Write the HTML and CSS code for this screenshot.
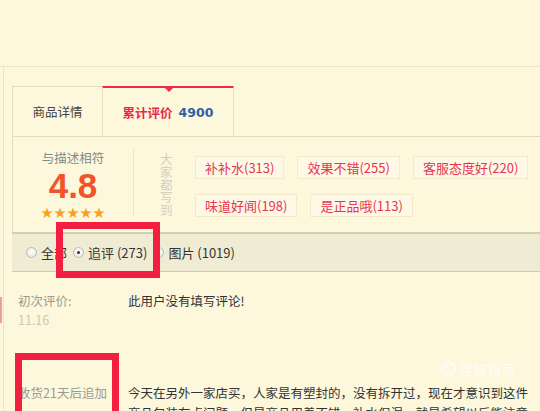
FILE: index.html
```html
<!DOCTYPE html>
<html lang="zh-CN">
<head>
<meta charset="utf-8">
<title>累计评价</title>
<link rel="stylesheet" href="styles.css">
</head>
<body>
<div class="page">
  <div class="header"></div>
  <div class="wrap">
    <div class="tabs">
      <div class="tab">商品详情</div>
      <div class="tab active"><span class="tab-name">累计评价</span><span class="tab-count">4900</span></div>
    </div>
    <div class="rating">
      <div class="score">
        <div class="score-label">与描述相符</div>
        <div class="score-value">4.8</div>
        <div class="stars">★★★★★</div>
      </div>
      <div class="divider"></div>
      <div class="vlabel">大家都写到</div>
      <div class="tags">
        <div class="tag-row">
          <span class="tag">补补水(313)</span>
          <span class="tag">效果不错(255)</span>
          <span class="tag">客服态度好(220)</span>
        </div>
        <div class="tag-row">
          <span class="tag">味道好闻(198)</span>
          <span class="tag">是正品哦(113)</span>
        </div>
      </div>
    </div>
    <div class="filter">
      <label class="opt"><span class="radio"></span>全部</label>
      <label class="opt"><span class="radio checked"></span>追评 (273)</label>
      <label class="opt"><span class="radio"></span>图片 (1019)</label>
    </div>
    <div class="reviews">
      <div class="review first">
        <div class="meta">
          <div class="meta-label">初次评价:</div>
          <div class="meta-date">11.16</div>
        </div>
        <div class="content">此用户没有填写评论!</div>
      </div>
      <div class="review second">
        <div class="meta">
          <div class="meta-label">收货21天后追加</div>
        </div>
        <div class="content">今天在另外一家店买，人家是有塑封的，没有拆开过，现在才意识到这件商品包装有点问题，但是商品用着不错，补水保湿，就是希望以后能注意</div>
      </div>
    </div>
  </div>
  <div class="edge-mark"></div>
  <div class="watermark"><span class="wm-logo">S</span><span class="wm-text">搜狗指南</span></div>
  <div class="highlight h1"></div>
  <div class="highlight h2"></div>
</div>
</body>
</html>
```

FILE: styles.css
```css
* { box-sizing: border-box; }
html, body { margin: 0; padding: 0; }
body {
  background: #fdf7dc;
  font-family: "Noto Sans CJK SC", "Liberation Sans", sans-serif;
  color: #333;
  font-size: 12.5px;
}
.page {
  position: relative;
  width: 540px;
  height: 411px;
  overflow: hidden;
}
.header {
  height: 67px;
  border-bottom: 1px solid #ede6c9;
}
.wrap {
  margin-left: 3px;
  border-left: 1px solid #ebe4c7;
  padding-left: 8px;
  padding-top: 19px;
}
.tabs {
  display: flex;
  height: 51px;
  border-bottom: 1px solid #e2dbbe;
}
.tab {
  width: 90px;
  height: 50px;
  border-top: 1px solid #e4ddc1;
  border-left: 1px solid #e4ddc1;
  display: flex;
  align-items: center;
  justify-content: center;
  font-size: 12.5px;
  color: #444;
}
.tab.active {
  position: relative;
  width: 132px;
  border-top: 2px solid #ee2b48;
  border-right: 1px solid #e4ddc1;
  font-weight: bold;
}
.tab.active::after {
  content: "";
  position: absolute;
  top: -1px;
  left: 61px;
  border-left: 5px solid transparent;
  border-right: 5px solid transparent;
  border-top: 5px solid #ee2b48;
}
.tab-name { color: #e8284a; }
.tab-count {
  color: #2d62a8;
  margin-left: 6px;
  font-family: "DejaVu Sans", "Liberation Sans", sans-serif;
  font-size: 12.5px;
}
.rating {
  display: flex;
  height: 95px;
  border-left: 1px solid #e4ddc1;
}
.score {
  width: 120px;
  display: flex;
  flex-direction: column;
  align-items: center;
  padding-top: 13px;
}
.score-label {
  font-size: 12.5px;
  line-height: 16px;
  color: #7d8b8a;
}
.score-value {
  font-family: "Liberation Sans", sans-serif;
  font-weight: bold;
  font-size: 35px;
  line-height: 34px;
  color: #f2532a;
  margin-top: 3px;
}
.stars {
  font-family: "DejaVu Sans", sans-serif;
  font-size: 14.5px;
  line-height: 14px;
  color: #f6a11f;
  margin-top: 3px;
}
.divider {
  width: 1px;
  height: 68px;
  margin-top: 12px;
  background: #ece6cd;
}
.vlabel {
  width: 13px;
  flex: 0 0 13px;
  font-size: 12.5px;
  line-height: 12.8px;
  color: #d4cfbf;
  margin-left: 26px;
  margin-top: 16px;
  word-break: break-all;
}
.tags {
  margin-left: 22px;
  padding-top: 19px;
  display: flex;
  flex-direction: column;
  gap: 15px;
}
.tag-row {
  display: flex;
  gap: 13px;
}
.tag {
  height: 23px;
  line-height: 21px;
  padding: 0 9px;
  border: 1px solid #f3e9cb;
  background: #fef9e6;
  color: #e63653;
  font-size: 13px;
  white-space: nowrap;
}
.filter {
  height: 40px;
  background: #efecd3;
  border-top: 2px solid #cdd1b3;
  border-bottom: 1px solid #c7ccae;
  display: flex;
  align-items: center;
  padding-left: 14px;
  gap: 6px;
}
.opt {
  display: flex;
  align-items: center;
  gap: 4px;
  font-size: 13px;
  color: #333;
}
.radio {
  width: 11px;
  height: 11px;
  border-radius: 50%;
  border: 1px solid #b9bcb0;
  background: radial-gradient(circle at 50% 40%, #ffffff, #e3e3dc);
  position: relative;
}
.radio.checked::after {
  content: "";
  position: absolute;
  left: 3px;
  top: 3px;
  width: 3px;
  height: 3px;
  border-radius: 50%;
  background: #333;
}
.reviews {
  padding-left: 6px;
}
.review {
  display: flex;
}
.review.first { padding-top: 19px; }
.review.second { padding-top: 54px; }
.meta { width: 110px; }
.meta-label {
  color: #9b9b90;
  font-size: 12.5px;
  line-height: 20px;
  white-space: nowrap;
}
.meta-date {
  color: #cbc8b4;
  font-size: 12.5px;
  line-height: 18px;
}
.content {
  width: 405px;
  font-size: 12.5px;
  line-height: 20px;
  color: #333;
}
.edge-mark {
  position: absolute;
  left: 0;
  top: 297px;
  width: 2px;
  height: 26px;
  background: #e8a0a4;
}
.watermark {
  position: absolute;
  left: 441px;
  top: 359px;
  display: flex;
  align-items: center;
  gap: 4px;
  color: rgba(255, 255, 255, 0.75);
}
.wm-logo {
  width: 15px;
  height: 15px;
  border-radius: 50%;
  border: 2px solid rgba(255, 255, 255, 0.75);
  font-family: "Liberation Sans", sans-serif;
  font-weight: bold;
  font-size: 10px;
  line-height: 11px;
  text-align: center;
}
.wm-text {
  font-size: 13px;
  letter-spacing: 1px;
}
.highlight {
  position: absolute;
  border: 7px solid #f21f41;
}
.h1 { left: 56px; top: 222px; width: 104px; height: 56px; }
.h2 { left: 15px; top: 353px; width: 104px; height: 70px; }
```
